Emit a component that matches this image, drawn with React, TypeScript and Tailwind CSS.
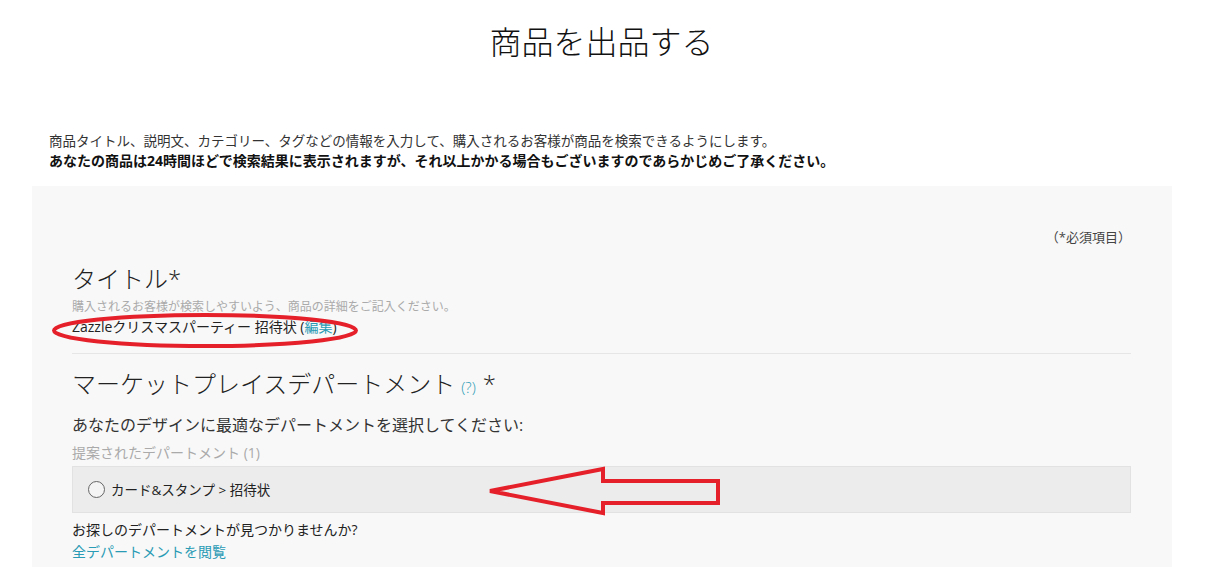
import React from "react";

export default function App() {
  return (
    <div
      className="relative w-[1211px] h-[567px] overflow-hidden bg-white text-[#333]"
      style={{ fontFamily: '"Open Sans", "Noto Sans CJK JP", sans-serif' }}
    >
      <h1 className="pt-[22px] pr-[8px] text-center text-[32px] leading-[40px] font-light text-[#111]">
        商品を出品する
      </h1>

      <div className="mt-[69px] ml-[49px] leading-[20px] text-[#333]">
        <p className="text-[13.5px]">商品タイトル、説明文、カテゴリー、タグなどの情報を入力して、購入されるお客様が商品を検索できるようにします。</p>
        <p className="text-[14px] font-bold text-[#111]">
          あなたの商品は24時間ほどで検索結果に表示されますが、それ以上かかる場合もございますのであらかじめご了承ください。
        </p>
      </div>

      <div className="mt-[15px] ml-[32px] mr-[39px] bg-[#f8f8f8] pt-[41px] pl-[40px] pr-[41px] pb-[40px]">
        <div className="flex justify-end text-[13px] leading-[20px] text-[#444]">（*必須項目）</div>

        <h2 className="mt-[16px] text-[24px] leading-[32px] font-light text-[#222]">タイトル*</h2>
        <p className="mt-[4px] text-[12px] leading-[16px] text-[#aaa]">
          購入されるお客様が検索しやすいよう、商品の詳細をご記入ください。
        </p>
        <p className="mt-[3px] text-[14px] leading-[18px] text-[#222]">
          Zazzleクリスマスパーティー 招待状 (<span className="text-[#2a9bb5]">編集</span>)
        </p>

        <div className="mt-[17px] border-t border-[#e6e6e6]" />

        <h2 className="mt-[14px] flex items-baseline text-[24px] leading-[32px] font-light text-[#222]">
          マーケットプレイスデパートメント
          <span className="ml-[6px] text-[15px] text-[#2a9bb5]">(?)</span>
          <span className="ml-[7px]">*</span>
        </h2>
        <p className="mt-[11px] text-[16px] leading-[22px] text-[#333]">
          あなたのデザインに最適なデパートメントを選択してください:
        </p>
        <p className="mt-[7px] text-[14px] leading-[20px] text-[#aaa]">提案されたデパートメント (1)</p>

        <div className="mt-[3px] h-[47px] flex items-center gap-[6px] pl-[15px] bg-[#ececec] border border-[#e2e2e2]">
          <span className="w-[17px] h-[17px] rounded-full border border-[#666] bg-[#f4f4f4]" />
          <span className="text-[13.5px] leading-[18px] text-[#222]">カード&amp;スタンプ &gt; 招待状</span>
        </div>

        <p className="mt-[7px] text-[14px] leading-[20px] text-[#222]">お探しのデパートメントが見つかりませんか?</p>
        <p className="mt-[2px] text-[14px] leading-[20px] text-[#2a9bb5]">全デパートメントを閲覧</p>
      </div>

      <svg className="absolute left-0 top-0 pointer-events-none" width="1211" height="567">
        <ellipse cx="205" cy="330.5" rx="151" ry="15.5" fill="none" stroke="#e5202a" strokeWidth="4" />
        <polygon
          points="490,491 603,469 603,481 718,481 718,503 603,503 603,513"
          fill="none"
          stroke="#e5202a"
          strokeWidth="4"
          strokeLinejoin="miter"
        />
      </svg>
    </div>
  );
}
